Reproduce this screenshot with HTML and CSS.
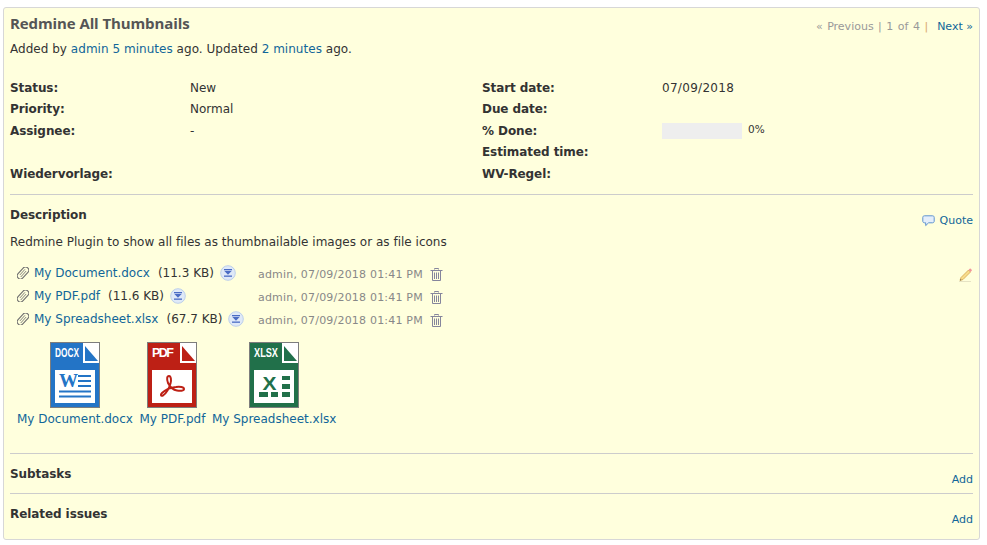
FILE: index.html
```html
<!DOCTYPE html>
<html lang="en">
<head>
<meta charset="utf-8">
<title>Redmine All Thumbnails</title>
<link rel="stylesheet" href="styles.css">
</head>
<body>
<svg class="defs" width="0" height="0" aria-hidden="true">
  <symbol id="clip" viewBox="0 0 12 12">
    <g transform="rotate(42 6 6)" fill="none" stroke="#6e6e6e">
      <rect x="2.800" y="-1" width="6.400" height="14" rx="3.200" stroke-width="1.100"/>
      <path d="M5 2v7.500M7 2.500v8" stroke-width=".8"/>
    </g>
  </symbol>
  <symbol id="dl" viewBox="0 0 16 16">
    <circle cx="8" cy="8" r="7.300" fill="#dfe9f8" stroke="#bccfea"/>
    <rect x="4" y="4" width="8" height="1.300" fill="#4a6cc4"/>
    <path d="M4.400 6h7.200L8 9.800Z" fill="#4a6cc4"/>
    <rect x="4" y="10.500" width="8" height="1.300" fill="#4a6cc4"/>
  </symbol>
  <symbol id="trash" viewBox="0 0 13 13">
    <path d="M4.500 1.500v-1h4v1M.5 2.500h12M2.500 3v9.500h8V3M4.500 4.500v6.500M6.500 4.500v6.500M8.500 4.500v6.500" fill="none" stroke="#85859c" stroke-width="1"/>
  </symbol>
</svg>
<main class="issue">
  <header class="head">
    <h2 class="title">Redmine All Thumbnails</h2>
    <nav class="pager"><span class="muted">« Previous | 1 of 4 </span><span class="pipe">|</span><a class="next" href="#">Next »</a></nav>
  </header>
  <p class="author">Added by <a href="#">admin</a> <a href="#">5 minutes</a> ago. Updated <a href="#">2 minutes</a> ago.</p>

  <section class="attrs">
    <b>Status:</b><span>New</span><b>Start date:</b><span class="date">07/09/2018</span>
    <b>Priority:</b><span>Normal</span><b>Due date:</b><span></span>
    <b>Assignee:</b><span>-</span><b>% Done:</b><span class="done"><i class="bar"></i><small>0%</small></span>
    <span></span><span></span><b>Estimated time:</b><span></span>
    <b>Wiedervorlage:</b><span></span><b>WV-Regel:</b><span></span>
  </section>

  <section class="desc">
    <div class="desc-head">
      <h3 class="sub">Description</h3>
      <a class="quote" href="#"><svg width="13" height="12" viewBox="0 0 13 12"><path d="M2.500.8h8c1 0 1.700.6 1.700 1.600v3.800c0 1-.7 1.600-1.700 1.600H6.600L3.700 10.600V7.800H2.500C1.500 7.800.8 7.200.8 6.200V2.400C.8 1.400 1.500.8 2.500.8Z" fill="#e4eefb" stroke="#5f93cf"/></svg>Quote</a>
    </div>
    <p class="desc-text">Redmine Plugin to show all files as thumbnailable images or as file icons</p>
  </section>

  <section class="files">
    <div class="file">
      <span class="name"><svg class="clip" width="12" height="12"><use href="#clip"/></svg><a href="#">My Document.docx</a><span class="size">(11.3 KB)</span><svg class="dl" width="16" height="16"><use href="#dl"/></svg></span>
      <span class="meta">admin, 07/09/2018 01:41 PM</span><svg class="trash" width="13" height="13"><use href="#trash"/></svg>
      <svg class="pencil" width="15" height="15" viewBox="0 0 15 15"><path d="M1 14.500h12" stroke="#e6e3c4" stroke-width="1"/><path d="M3 10.500 10.500 3l2 2L5 12.500 2 13.500Z" fill="#f8dc8c" stroke="#d3a54a" stroke-width=".8"/><path d="M10.500 3l1.200-1.200c.3-.3.7-.3 1 0l1 1c.3.3.3.7 0 1L12.500 5Z" fill="#f2959a"/><path d="M2 13.500l.5-1.500 1 1Z" fill="#666"/></svg>
    </div>
    <div class="file">
      <span class="name"><svg class="clip" width="12" height="12"><use href="#clip"/></svg><a href="#">My PDF.pdf</a><span class="size">(11.6 KB)</span><svg class="dl" width="16" height="16"><use href="#dl"/></svg></span>
      <span class="meta">admin, 07/09/2018 01:41 PM</span><svg class="trash" width="13" height="13"><use href="#trash"/></svg>
    </div>
    <div class="file">
      <span class="name"><svg class="clip" width="12" height="12"><use href="#clip"/></svg><a href="#">My Spreadsheet.xlsx</a><span class="size">(67.7 KB)</span><svg class="dl" width="16" height="16"><use href="#dl"/></svg></span>
      <span class="meta">admin, 07/09/2018 01:41 PM</span><svg class="trash" width="13" height="13"><use href="#trash"/></svg>
    </div>
  </section>

  <section class="thumbs">
    <a class="thumb" href="#">
      <svg width="50" height="66" viewBox="0 0 50 66">
        <rect x=".5" y=".5" width="49" height="65" fill="#2374c6" stroke="#7d7d7d"/>
        <path d="M33 1h16v20H33Z" fill="#fff"/>
        <path d="M35 4 48 19H35Z" fill="#2374c6"/>
        <text x="5" y="14.500" class="ft" textLength="24" lengthAdjust="spacingAndGlyphs">DOCX</text>
        <rect x="5" y="28" width="40" height="33" fill="#fff"/>
        <text x="9" y="45" class="w" textLength="19" lengthAdjust="spacingAndGlyphs">W</text>
        <path d="M28 34h13M28 39h13M28 44h13M9 49.500h32M9 54.500h32" stroke="#2374c6" stroke-width="1.800"/>
      </svg>
      <span>My Document.docx</span>
    </a>
    <a class="thumb" href="#">
      <svg width="50" height="66" viewBox="0 0 50 66">
        <rect x=".5" y=".5" width="49" height="65" fill="#bd2015" stroke="#7d7d7d"/>
        <path d="M33 1h16v20H33Z" fill="#fff"/>
        <path d="M35 4 48 19H35Z" fill="#bd2015"/>
        <text x="5" y="14.500" class="ft" textLength="22" lengthAdjust="spacing">PDF</text>
        <rect x="5" y="28" width="40" height="33" fill="#fff"/>
        <path d="M22 34c-2 0-2.500 3-1 7 2 4 5 7 9 7.500 3 .5 7 .5 7-1.500s-4-2.500-8-2c-5 .5-11 3-14 6-2 2-1 3.500 1 2.500 3-2 6-7 7.500-12 1-3 .5-7.500-1.500-7.500Z" fill="none" stroke="#bd2015" stroke-width="2"/>
      </svg>
      <span>My PDF.pdf</span>
    </a>
    <a class="thumb" href="#">
      <svg width="50" height="66" viewBox="0 0 50 66">
        <rect x=".5" y=".5" width="49" height="65" fill="#21704a" stroke="#7d7d7d"/>
        <path d="M33 1h16v20H33Z" fill="#fff"/>
        <path d="M35 4 48 19H35Z" fill="#21704a"/>
        <text x="5" y="14.500" class="ft" textLength="24" lengthAdjust="spacingAndGlyphs">XLSX</text>
        <rect x="5" y="28" width="40" height="33" fill="#fff"/>
        <text x="13.500" y="48" class="x" textLength="14" lengthAdjust="spacingAndGlyphs">X</text>
        <path d="M33 34h8v4h-8ZM33 42h8v5h-8ZM10 50h9v5h-9ZM22 50h7v5h-7ZM33 50h8v5h-8Z" fill="#21704a"/>
      </svg>
      <span>My Spreadsheet.xlsx</span>
    </a>
  </section>

  <section class="block first"><h3 class="sub">Subtasks</h3><a href="#" class="add">Add</a></section>
  <section class="block"><h3 class="sub">Related issues</h3><a href="#" class="add">Add</a></section>
</main>
</body>
</html>
```
FILE: styles.css
```css
html, body { margin: 0; padding: 0; background: #fff; }
body {
  padding: 7px 7px 0 3px;
  font-family: "DejaVu Sans", Verdana, sans-serif;
  font-size: 12px;
  color: #333;
}
.defs { position: absolute; }
a { color: #169; text-decoration: none; }
h2, h3, p { margin: 0; }
.issue {
  width: 977px;
  height: 533px;
  box-sizing: border-box;
  padding: 0 6px 0 6px;
  background: #ffffdd;
  border: 1px solid #d7d7d7;
  border-radius: 3px;
  overflow: hidden;
}
.head { display: flex; justify-content: space-between; padding-top: 4px; }
.title {
  font-family: "Open Sans", sans-serif;
  font-size: 15px;
  line-height: 22px;
  font-weight: 700;
  color: #555;
  letter-spacing: -.1px;
}
.pager { font-size: 11px; line-height: 14px; padding-top: 8px; word-spacing: 1px; }
.muted { color: #999; }
.pipe { color: #d9a76a; }
.next { margin-left: 9px; word-spacing: 0; }
.author { margin-top: 7px; line-height: 16px; letter-spacing: .03px; }
.attrs {
  display: grid;
  grid-template-columns: 180px 292px 180px 1fr;
  grid-auto-rows: 21.5px;
  margin-top: 22.75px;
  line-height: 16px;
  border-bottom: 1px solid #ccc;
  padding-bottom: 6.25px;
}
.attrs b { color: #333; letter-spacing: -.08px; }
.date { letter-spacing: .3px; }
.done { display: flex; align-items: flex-start; }
.bar { width: 80px; height: 16px; background: #eee; }
.done small { font-size: 10.500px; margin-left: 6px; line-height: 13px; }
.desc { margin-top: 12px; }
.desc-head { display: flex; justify-content: space-between; }
.sub { font-size: 12px; line-height: 16px; font-weight: 700; color: #333; letter-spacing: -.08px; }
.quote { display: flex; align-items: center; gap: 5px; margin-top: 6px; line-height: 16px; font-size: 11px; }
.desc-text { margin-top: 5px; line-height: 16px; letter-spacing: .01px; }
.files { margin-top: 12px; padding-left: 7px; }
.file { display: flex; align-items: center; height: 23px; }
.name { width: 241px; display: flex; align-items: center; }
.clip { margin-right: 5px; flex: none; }
.size { margin-left: 8px; }
.dl { margin-left: 6px; flex: none; }
.meta { font-size: 11px; color: #888; width: 172px; letter-spacing: .2px; padding-top: 2px; }
.trash { flex: none; margin-top: 2px; }
.pencil { margin-left: auto; margin-top: 2px; }
.thumbs { display: flex; gap: 6.500px; margin-top: 11px; padding-left: 7px; }
.thumb { display: flex; flex-direction: column; align-items: center; line-height: 16px; }
.thumb svg { display: block; margin-bottom: 3px; }
.ft { font-family: "Liberation Sans", sans-serif; font-size: 12.500px; font-weight: 700; fill: #fff; }
.w { font-family: "Liberation Serif", serif; font-size: 18px; font-weight: 700; fill: #2374c6; }
.x { font-family: "Liberation Sans", sans-serif; font-size: 18px; font-weight: 700; fill: #21704a; }
.block {
  display: flex;
  justify-content: space-between;
  border-top: 1px solid #ccc;
  padding-top: 12px;
  height: 27px;
}
.block.first { margin-top: 26px; }
.add { font-size: 11px; margin-top: 7px; line-height: 14px; }
```
